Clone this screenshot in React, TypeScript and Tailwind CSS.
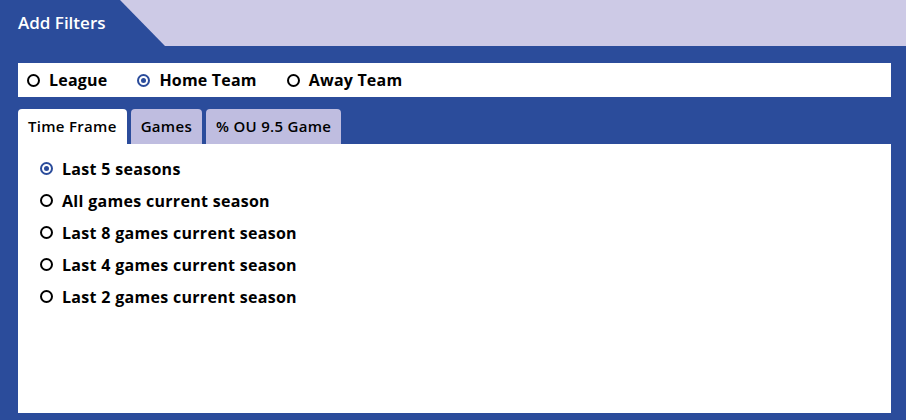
import { useState } from "react"

const teams = ["League", "Home Team", "Away Team"]
const tabs = ["Time Frame", "Games", "% OU 9.5 Game"]
const frames = [
  "Last 5 seasons",
  "All games current season",
  "Last 8 games current season",
  "Last 4 games current season",
  "Last 2 games current season",
]

function Radio({ on }: { on: boolean }) {
  return (
    <span
      className={
        on
          ? "flex h-[13px] w-[13px] shrink-0 items-center justify-center rounded-full border-2 border-[#2b4c9b]"
          : "h-[13px] w-[13px] shrink-0 rounded-full border-2 border-black"
      }
    >
      {on && <span className="h-[5px] w-[5px] rounded-full bg-[#2b4c9b]" />}
    </span>
  )
}

export default function App() {
  const [team, setTeam] = useState("Home Team")
  const [tab, setTab] = useState("Time Frame")
  const [frame, setFrame] = useState("Last 5 seasons")

  return (
    <div className="flex h-[420px] w-[906px] flex-col bg-[#2b4c9b] font-['Open_Sans',sans-serif] text-black">
      <div className="flex h-[46px] bg-[#cdcae6]">
        <div className="flex h-full w-[166px] items-center bg-[#2b4c9b] pl-[18px] text-[17px] font-semibold text-white [clip-path:polygon(0_0,120px_0,165px_100%,0_100%)]">
          Add Filters
        </div>
      </div>

      <div className="flex flex-1 flex-col pl-[18px] pr-[15px] pt-[17px] pb-[7px]">
        <div className="flex h-[34px] items-center gap-[30px] bg-white pl-[9px]">
          {teams.map((t) => (
            <button key={t} onClick={() => setTeam(t)} className="flex items-center gap-[9px] text-[16px] font-bold tracking-[0.2px]">
              <Radio on={team === t} />
              {t}
            </button>
          ))}
        </div>

        <div className="mt-[12px] flex h-[35px] items-end gap-[4px]">
          {tabs.map((t) => (
            <button
              key={t}
              onClick={() => setTab(t)}
              className={
                (tab === t ? "bg-white" : "bg-[#bfbde0]") +
                " h-[35px] rounded-t-[4px] px-[10px] text-[15px] font-semibold tracking-[0.3px]"
              }
            >
              {t}
            </button>
          ))}
        </div>

        <div className="flex flex-1 flex-col gap-[13px] bg-white pl-[22px] pt-[15px]">
          {frames.map((f) => (
            <button key={f} onClick={() => setFrame(f)} className="flex h-[19px] items-center gap-[9px] text-[16px] font-bold tracking-[0.3px]">
              <Radio on={frame === f} />
              {f}
            </button>
          ))}
        </div>
      </div>
    </div>
  )
}
